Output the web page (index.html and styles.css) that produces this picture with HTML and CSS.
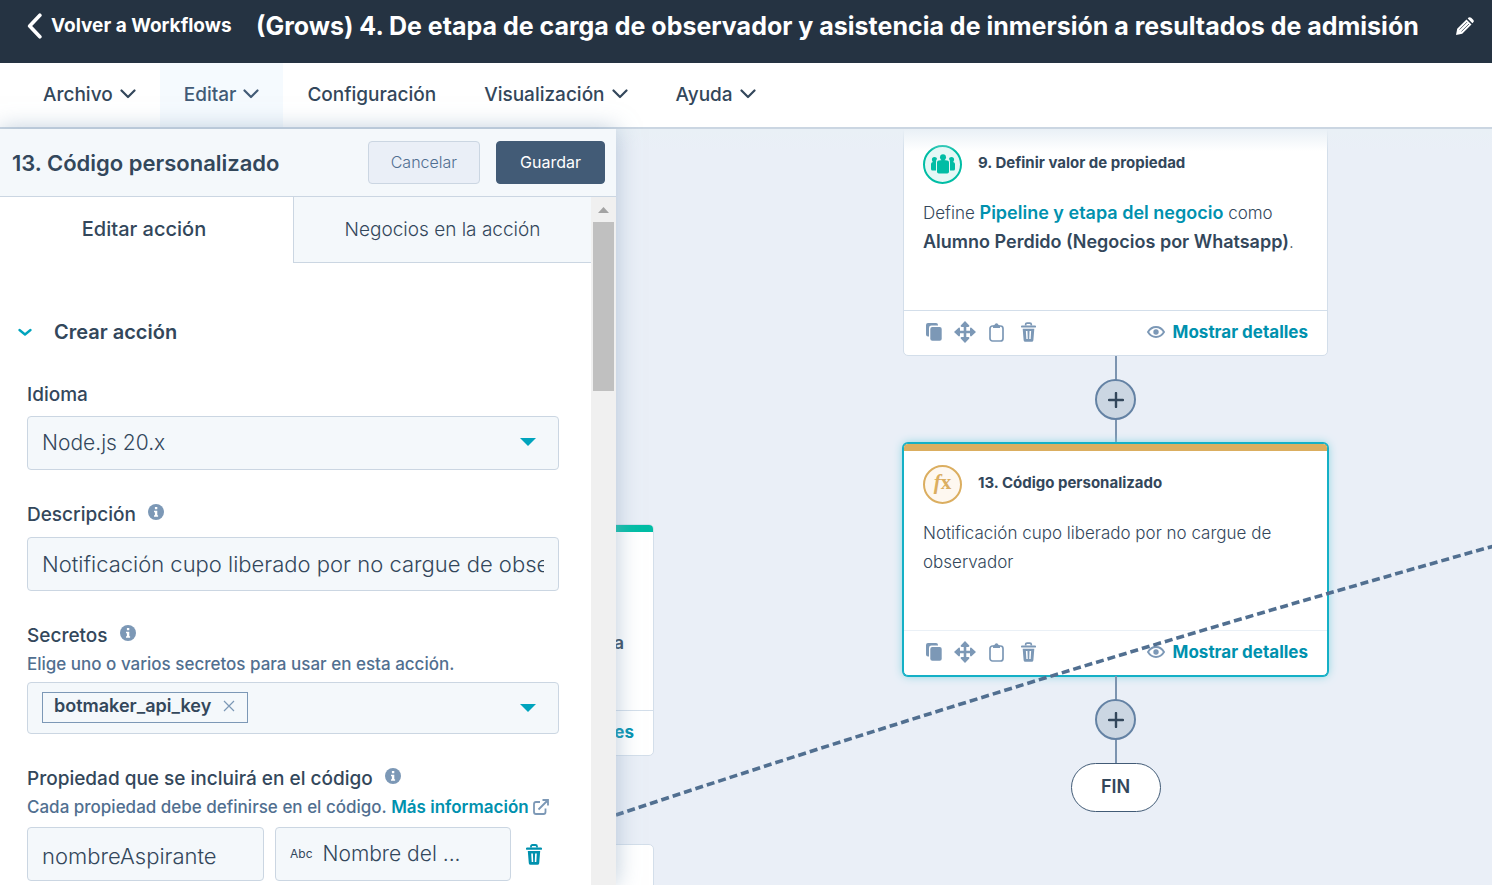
FILE: index.html
```html
<!DOCTYPE html>
<html lang="es">
<head>
<meta charset="utf-8">
<meta name="viewport" content="width=device-width, initial-scale=1">
<title>Workflows</title>
<link rel="stylesheet" href="styles.css">
</head>
<body>
<svg class="sprite" aria-hidden="true">
  <symbol id="chev" viewBox="0 0 16 10"><path d="M1.5 1.5 8 8l6.500-6.500" fill="none" stroke="currentColor" stroke-width="2.200" stroke-linecap="round" stroke-linejoin="round"/></symbol>
  <symbol id="chev-bold" viewBox="0 0 14 9"><path d="M1.500 2 7 6.500 12.500 2" fill="none" stroke="currentColor" stroke-width="2.300" stroke-linecap="round" stroke-linejoin="round"/></symbol>
  <symbol id="info" viewBox="0 0 16 16"><circle cx="8" cy="8" r="8" fill="#7c98b6"/><path d="M6.900 3h2.400v2.300H6.900zM6 6.800h3.300v4.400h.8v1.600H6v-1.600h.9V8.300H6z" fill="#fff"/></symbol>
  <symbol id="trash" viewBox="0 0 16 21"><path d="M5 3.500V2.500Q5 1 6.500 1h3Q11 1 11 2.500v1" fill="none" stroke="currentColor" stroke-width="1.800"/><path d="M1 3.600h14a.9.9 0 0 1 0 2.200H1a.9.9 0 0 1 0-2.200zM1.800 7h12.400l-1 12.200q-.2 1.600-1.800 1.600H4.600q-1.600 0-1.800-1.600zM5.200 9.500l.5 8.500h1.500L6.900 9.500zM9.100 9.500 8.800 18h1.500l.5-8.500z" fill="currentColor" fill-rule="evenodd"/></symbol>
  <symbol id="copy" viewBox="0 0 16 18"><path d="M2 0h8q2 0 2 2v.6H5.500Q3 2.600 3 5v8.500H2q-2 0-2-2V2q0-2 2-2z" fill="currentColor"/><rect x="4.300" y="4" width="11.400" height="13.700" rx="2" fill="currentColor"/></symbol>
  <symbol id="move" viewBox="0 0 22 22"><path d="M11 3v16M3 11h16" stroke="currentColor" stroke-width="2.600"/><path d="m11 0 4.300 4.600q.4 1.400-1 1.400H7.700q-1.400 0-1-1.400zM11 22l4.300-4.600q.4-1.400-1-1.400H7.700q-1.400 0-1 1.400zM0 11l4.600-4.300Q6 6.300 6 7.700v6.600q0 1.400-1.400 1zM22 11l-4.600-4.300q-1.400-.4-1.400 1v6.600q0 1.400 1.400 1z" fill="currentColor"/></symbol>
  <symbol id="clip" viewBox="0 0 15 19"><rect x="1" y="3" width="13" height="15" rx="2.500" fill="none" stroke="currentColor" stroke-width="1.700"/><path d="M4 5V3.300q0-1 1.400-1.200Q6 .3 7.500.3t2.100 1.800q1.400.2 1.400 1.200V5z" fill="currentColor"/></symbol>
  <symbol id="eye" viewBox="0 0 18 12"><path d="M1 6q3-5 8-5t8 5q-3 5-8 5T1 6z" fill="none" stroke="currentColor" stroke-width="1.900"/><circle cx="9" cy="6" r="2.700" fill="currentColor"/></symbol>
  <symbol id="plus" viewBox="0 0 16 16"><path d="M8 1v14M1 8h14" stroke="currentColor" stroke-width="2.400" stroke-linecap="round"/></symbol>
</svg>

<header class="topbar">
  <a class="back" href="#"><svg class="back-icon" viewBox="0 0 14 24"><path d="M12 2 2.500 12 12 22" fill="none" stroke="currentColor" stroke-width="3.400" stroke-linecap="round" stroke-linejoin="round"/></svg>Volver a Workflows</a>
  <h1>(Grows) 4. De etapa de carga de observador y asistencia de inmersión a resultados de admisión</h1>
  <button class="edit" aria-label="Editar nombre"><svg viewBox="0 0 18 18"><path d="M0 18 1.200 11.800 10.500 2.500l5 5L6.200 16.800zM11.700 1.400 12.600.6q1.200-1 2.600.2l2 2q1.200 1.300.1 2.500l-.9.9z" fill="#fff"/><path d="M3.500 12.600 11 5.100M5.400 14.500 13 7" stroke="#253342" stroke-width=".7"/></svg></button>
</header>

<nav class="menu">
  <button>Archivo <svg><use href="#chev"/></svg></button>
  <button class="active">Editar <svg><use href="#chev"/></svg></button>
  <button>Configuración</button>
  <button>Visualización <svg><use href="#chev"/></svg></button>
  <button>Ayuda <svg><use href="#chev"/></svg></button>
</nav>

<main class="work">
  <section class="canvas">
    <article class="card under-a">
      <div class="bar teal"></div>
      <div class="body"><p class="tail"><strong>a</strong></p></div>
      <footer><button class="details"><span>Mostrar detalles</span></button></footer>
    </article>
    <article class="card under-b"></article>

    <div class="flow">
      <article class="card">
        <div class="bar"></div>
        <div class="body">
          <div class="head"><span class="badge green"><svg viewBox="0 0 24 20" fill="#00bda5"><circle cx="12" cy="3.200" r="3"/><path d="M10.300 4h3.400v2.300q4.300-.3 4.300 2.200v9.200q0 1.800-1.800 1.800H7.800Q6 19.500 6 17.700V8.500q0-2.500 4.300-2.200z"/><path d="M5 8.400v8.200H1.500Q0 16.600 0 15V10q0-1.600 1.800-2Q.9 7 .9 5.600q0-2.500 2.600-2.500 2.300 0 2.600 2Q5 5.500 5 8.400zM19 8.400v8.200h3.500q1.500 0 1.500-1.600V10q0-1.600-1.800-2 .9-1 .9-2.400 0-2.500-2.600-2.500-2.300 0-2.600 2 1.100.4 1.100 3.300z"/></svg></span><h2>9. Definir valor de propiedad</h2></div>
          <p>Define <a href="#">Pipeline y etapa del negocio</a> como<br><strong>Alumno Perdido (Negocios por Whatsapp)</strong>.</p>
        </div>
        <footer>
          <button aria-label="Copiar"><svg class="i-copy"><use href="#copy"/></svg></button>
          <button aria-label="Mover"><svg class="i-move"><use href="#move"/></svg></button>
          <button aria-label="Pegar"><svg class="i-clip"><use href="#clip"/></svg></button>
          <button aria-label="Eliminar"><svg class="i-trash"><use href="#trash"/></svg></button>
          <button class="details"><svg><use href="#eye"/></svg><span>Mostrar detalles</span></button>
        </footer>
      </article>
      <div class="wire"><button class="add" aria-label="Añadir acción"><svg><use href="#plus"/></svg></button></div>
      <article class="card selected">
        <div class="bar gold"></div>
        <div class="body">
          <div class="head"><span class="badge orange"><i>f</i>x</span><h2>13. Código personalizado</h2></div>
          <p>Notificación cupo liberado por no cargue de<br>observador</p>
        </div>
        <footer>
          <button aria-label="Copiar"><svg class="i-copy"><use href="#copy"/></svg></button>
          <button aria-label="Mover"><svg class="i-move"><use href="#move"/></svg></button>
          <button aria-label="Pegar"><svg class="i-clip"><use href="#clip"/></svg></button>
          <button aria-label="Eliminar"><svg class="i-trash"><use href="#trash"/></svg></button>
          <button class="details"><svg><use href="#eye"/></svg><span>Mostrar detalles</span></button>
        </footer>
      </article>
      <div class="wire"><button class="add" aria-label="Añadir acción"><svg><use href="#plus"/></svg></button></div>
      <div class="end">FIN</div>
    </div>

    <svg class="link" viewBox="0 0 892 276"><path d="M0 273Q430 130 892 0" fill="none" stroke="#516f90" stroke-width="3.600" stroke-dasharray="8 4"/></svg>
    <div class="fade"></div>
  </section>

  <aside class="panel">
    <div class="panel-head">
      <h2>13. Código personalizado</h2>
      <button class="btn">Cancelar</button>
      <button class="btn primary">Guardar</button>
    </div>
    <div class="panel-main">
      <div class="panel-content">
        <div class="tabs" role="tablist">
          <button role="tab" aria-selected="true">Editar acción</button>
          <button role="tab" aria-selected="false">Negocios en la acción</button>
        </div>
        <form class="form">
          <button type="button" class="section"><svg><use href="#chev-bold"/></svg>Crear acción</button>
          <div class="field">
            <label for="lang">Idioma</label>
            <div class="pick"><select id="lang" class="box"><option>Node.js 20.x</option></select></div>
          </div>
          <div class="field">
            <div class="label"><label for="desc">Descripción</label><svg class="info"><use href="#info"/></svg></div>
            <input id="desc" class="box" type="text" value="Notificación cupo liberado por no cargue de observador">
          </div>
          <div class="field secrets">
            <div class="label"><span>Secretos</span><svg class="info"><use href="#info"/></svg></div>
            <p class="help">Elige uno o varios secretos para usar en esta acción.</p>
            <div class="pick"><div class="box tags"><span class="tag">botmaker_api_key<button type="button" aria-label="Quitar"><svg viewBox="0 0 12 12"><path d="m1 1 10 10M11 1 1 11" stroke="#7c98b6" stroke-width="1.200"/></svg></button></span></div></div>
          </div>
          <div class="field">
            <div class="label"><label for="prop">Propiedad que se incluirá en el código</label><svg class="info"><use href="#info"/></svg></div>
            <p class="help">Cada propiedad debe definirse en el código. <a href="#">Más información <svg viewBox="0 0 16 16"><path d="M7 3H3Q1 3 1 5v8q0 2 2 2h7.500q2 0 2-2V9.500M5.500 10.500 14 2M9.500 1H15v5.500" fill="none" stroke="#7c98b6" stroke-width="1.800"/></svg></a></p>
            <div class="row">
              <input id="prop" class="box" type="text" value="nombreAspirante">
              <button type="button" class="box value"><small>Abc</small>Nombre del ...</button>
              <button type="button" class="remove" aria-label="Eliminar propiedad"><svg><use href="#trash"/></svg></button>
            </div>
          </div>
        </form>
      </div>
      <div class="scroll" aria-hidden="true"><svg viewBox="0 0 11 6"><path d="M0 6 5.500 0 11 6z" fill="#a3a3a3"/></svg><div class="thumb"></div></div>
    </div>
  </aside>
</main>
</body>
</html>
```

FILE: styles.css
```css
* { box-sizing: border-box; }
html, body { height: 100%; }
body {
  margin: 0;
  display: flex;
  flex-direction: column;
  overflow: hidden;
  font-family: Inter, "Open Sans", sans-serif;
  font-size: 18px;
  color: #33475b;
  background: #fff;
}
h1, h2, p { margin: 0; }
button { font: inherit; color: inherit; background: none; border: 0; padding: 0; cursor: pointer; }
a { color: #0091ae; font-weight: 600; text-decoration: none; }
svg { display: block; flex: none; }
.sprite { position: absolute; width: 0; height: 0; }

.topbar {
  display: flex;
  align-items: center;
  height: 63px;
  padding: 0 18px 12px 27px;
  background: #253342;
  color: #fff;
  white-space: nowrap;
}
.back { display: flex; align-items: center; gap: 9px; color: #fff; font-size: 19px; font-weight: 700; width: 229px; }
.back-icon { width: 15px; height: 26px; }
h1 { flex: 1; font-size: 25px; line-height: 32px; font-weight: 700; }
.edit svg { width: 18px; height: 18px; }

.menu {
  display: flex;
  height: 66px;
  padding-left: 19px;
  border-bottom: 2px solid #cbd6e2;
  font-size: 19px;
  font-weight: 500;
}
.menu button { display: flex; align-items: center; gap: 7px; padding: 0 24px 2px; }
.menu svg { width: 16px; height: 10px; }
.menu .active { background: #f5fafe; color: #425b76; }

.work { flex: 1; min-height: 0; display: grid; grid-template: 100% / 100%; }
.canvas, .panel { grid-area: 1 / 1; }
.canvas { position: relative; overflow: hidden; background: #eaeff7; }

.card {
  width: 425px;
  min-height: 232px;
  display: flex;
  flex-direction: column;
  overflow: hidden;
  background: #fff;
  border: 1px solid #d3deea;
  border-radius: 5px;
}
.card.selected { min-height: 233px; border-color: #14b0c6; box-shadow: 0 0 0 1px #14b0c6, 0 0 10px #7fd1de; }
.bar { height: 7px; }
.teal { background: #00bda5; }
.gold { background: #dbae60; }
.body { flex: 1; padding: 13px 19px 0; font-size: 17px; line-height: 29px; font-weight: 300; }
.selected .body { padding-top: 14px; }
.body p { margin-top: 15px; white-space: nowrap; }
.body strong, .body a { font-size: 18px; line-height: 28px; font-weight: 600; }
.head { display: flex; align-items: center; gap: 16px; }
.head h2 { font-size: 15px; line-height: 20px; font-weight: 700; padding-bottom: 4px; }
.badge {
  width: 39px;
  height: 39px;
  display: flex;
  align-items: center;
  justify-content: center;
  border-radius: 50%;
  border: 2px solid;
}
.badge svg { width: 24px; height: 20px; }
.green { color: #00bda5; background: #e5f8f6; padding-bottom: 2px; }
.orange { color: #dbae60; background: #fef8f0; font: 700 21px/30px "Liberation Serif", serif; padding-bottom: 6px; }
.card footer {
  display: flex;
  align-items: center;
  height: 45px;
  padding: 0 19px 2px 22px;
  border-top: 1px solid #d3deea;
  color: #7c98b6;
}
.selected footer { border-color: #eaf0f6; }
.i-copy { width: 16px; height: 18px; margin-right: 12px; }
.i-move { width: 22px; height: 22px; margin-right: 13px; }
.i-clip { width: 15px; height: 19px; margin-right: 17px; }
.i-trash { width: 15px; height: 20px; }
.details { display: flex; align-items: center; gap: 8px; margin-left: auto; color: #0091ae; font-size: 17px; font-weight: 700; }
.details svg { width: 18px; height: 12px; color: #7c98b6; }

.flow { position: absolute; left: 903px; top: -5px; display: flex; flex-direction: column; align-items: center; }
.wire {
  height: 87px;
  display: flex;
  align-items: center;
  background: linear-gradient(#7c94b0, #7c94b0) center / 2px 100% no-repeat;
}
.add {
  width: 41px;
  height: 41px;
  display: flex;
  align-items: center;
  justify-content: center;
  border: 2px solid #6482a4;
  border-radius: 50%;
  background: #cbd6e2;
}
.add svg { width: 16px; height: 16px; }
.end {
  width: 90px;
  height: 49px;
  display: flex;
  align-items: center;
  justify-content: center;
  padding-bottom: 3px;
  background: #fff;
  border: 1px solid #425b76;
  border-radius: 25px;
  font-weight: 600;
}
.under-a, .under-b { position: absolute; left: 229px; }
.under-a { top: 395px; }
.under-b { top: 715px; }
.tail { text-align: right; padding: 69px 10px 0 0; }
.link { position: absolute; left: 616px; top: 413px; width: 892px; height: 276px; }
.fade { position: absolute; inset: 0 0 auto; height: 22px; background: linear-gradient(#e9f0f6, #e9f0f600); }

.panel {
  position: relative;
  width: 616px;
  display: flex;
  flex-direction: column;
  background: #fff;
  box-shadow: 0 0 22px #8da6bf99;
}
.panel-head {
  display: flex;
  align-items: center;
  height: 68px;
  padding: 0 11px 0 12px;
  background: #f4f8fb;
  border-bottom: 1px solid #cbd6e2;
}
.panel-head h2 { flex: 1; font-size: 22px; font-weight: 600; white-space: nowrap; }
.btn {
  height: 43px;
  padding: 0 22px 2px;
  border: 1px solid #cbd6e2;
  border-radius: 4px;
  background: #eaeff7;
  color: #506e91;
  font-size: 16px;
  font-weight: 300;
}
.btn + .btn { margin-left: 16px; }
.primary { padding: 0 23px 2px; background: #425b76; border-color: #425b76; color: #fff; font-weight: 400; }
.panel-main { flex: 1; min-height: 0; display: flex; }
.panel-content { flex: 1; min-width: 0; overflow: hidden; }
.scroll { width: 25px; background: #f0f0f0; display: flex; flex-direction: column; align-items: center; padding-top: 10px; }
.scroll svg { width: 11px; height: 6px; }
.thumb { width: 21px; height: 169px; margin-top: 9px; background: #c0c0c0; }
.tabs { display: grid; grid-template-columns: 293fr 298fr; height: 66px; font-size: 19px; }
.tabs button { color: #33475b; }
.tabs [aria-selected="true"] { font-weight: 500; font-size: 20px; padding-bottom: 2px; padding-right: 5px; }
.tabs [aria-selected="false"] { background: #f4f8fb; border: solid #cbd6e2; border-width: 0 0 1px 1px; font-weight: 300; }

.form { padding: 57px 32px 0 27px; font-size: 19px; line-height: 24px; font-weight: 500; }
.section { display: flex; align-items: center; gap: 22px; margin-left: -9px; font-size: 20px; font-weight: 600; line-height: 24px; }
.section svg { width: 14px; height: 9px; color: #00a4bd; }
.field { margin-top: 33px; }
.section + .field { margin-top: 39px; }
.field > label, .label { display: flex; gap: 12px; height: 24px; margin-bottom: 9px; }
.field + .field > .label { margin-bottom: 10px; }
.info { width: 16px; height: 16px; margin-top: 1px; }
.box {
  display: block;
  width: 100%;
  height: 54px;
  margin: 0;
  padding: 0 14px;
  border: 1px solid #cbd6e2;
  border-radius: 4px;
  background: #f4f8fb;
  color: #33475b;
  font: 300 21px/28px Inter, sans-serif;
  appearance: none;
}
input.box { font-size: 22px; }
#prop { padding-top: 4px; }
.pick { position: relative; }
.pick::after {
  content: "";
  position: absolute;
  right: 23px;
  top: 22px;
  border: 8px solid transparent;
  border-top-color: #00a4bd;
  border-bottom: 0;
}
.secrets .box { height: 52px; }
.field + .field > .label:has(+ .help) { margin-bottom: 4px; }
.help { height: 24px; margin-bottom: 6px; font-size: 17px; line-height: 24px; color: #516f90; white-space: nowrap; }
.help a svg { display: inline-block; width: 16px; height: 16px; vertical-align: -2px; }
.tags { padding-top: 8px; }
.tag {
  display: inline-flex;
  align-items: center;
  gap: 12px;
  height: 31px;
  padding: 0 12px 2px 11px;
  border: 1px solid #7c98b6;
  font-size: 18px;
  font-weight: 600;
}
.tag svg { width: 12px; height: 12px; }
.row { display: grid; grid-template-columns: 237px 236px auto; gap: 11px; align-items: center; margin-top: 8px; }
.value { display: flex; align-items: center; gap: 10px; }
.value small { font-size: 12px; font-weight: 400; }
.remove { padding-left: 4px; color: #0091ae; }
.remove svg { width: 16px; height: 21px; }
```
